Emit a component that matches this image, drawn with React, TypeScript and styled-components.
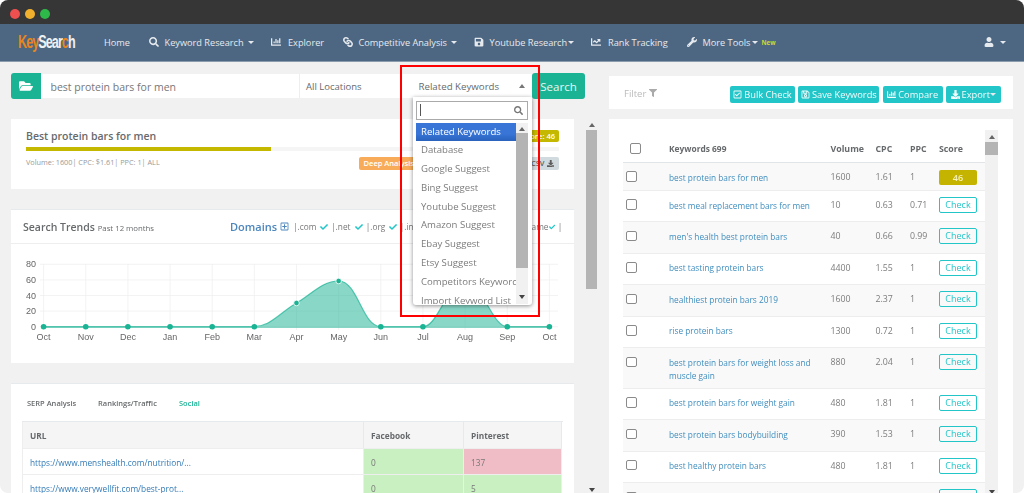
import React from 'react';
import styled, { createGlobalStyle } from 'styled-components';
import { FaSearch, FaChartBar, FaLink, FaRegSave, FaSave, FaChartLine, FaWrench, FaUser, FaFolderOpen, FaFilter, FaRegCheckSquare, FaDownload, FaCheck, FaRegPlusSquare } from 'react-icons/fa';

const Global = createGlobalStyle`
  html, body { margin: 0; padding: 0; background: #fff; }
  body { font-family: "Open Sans", "Liberation Sans", sans-serif; color: #676a6c; }
  * { box-sizing: border-box; }
`;

const Frame = styled.div`
  width: 1024px; height: 493px; overflow: hidden; border-radius: 8px; background: #f1f1f1; filter: blur(.3px);
`;
const TitleBar = styled.div`
  height: 24px; background: #363636; display: flex; align-items: center; gap: 5px; padding: 3px 0 0 10px;
`;
const Dot = styled.span<{ $c: string }>`
  width: 10px; height: 10px; border-radius: 50%; background: ${p => p.$c};
`;
const Nav = styled.nav`
  height: 37.5px; background: #4d6782; border-bottom: 1px solid #8b9cae; display: flex; align-items: center;
  padding-left: 18px; color: #e6eaee; font-size: 9.2px; white-space: nowrap;
`;
const Logo = styled.div`
  width: 58px; margin-right: 28px; font-family: "Liberation Sans", sans-serif; font-weight: 700; font-size: 14px;
  letter-spacing: -1.05px; color: #eef0f2; transform: scale(.9, 1.25); transform-origin: left center;
`;
const LogoKey = styled.span`color: #e8861c;`;
const NavItem = styled.span<{ $w: number; $gap?: number }>`
  width: ${p => p.$w}px; display: flex; align-items: center; gap: ${p => p.$gap ?? 5.5}px; flex: none;
  svg { font-size: 10px; flex: none; }
`;
const LinkIcon = styled(FaLink)`transform: rotate(90deg);`;
const Caret = styled.i<{ $ml?: number }>`
  display: inline-block; width: 0; height: 0; border: 3px solid transparent; border-top: 3.5px solid #e6eaee; border-bottom: 0; margin-left: ${p => p.$ml ?? -1.5}px;
`;
const NewTag = styled.b`
  color: #c8d93a; font-size: 6.3px; margin-left: -2.5px;
`;
const UserMenu = styled.span`
  margin-left: auto; margin-right: 18px; display: flex; align-items: center; gap: 8px; svg { font-size: 10px; }
`;
const Main = styled.main`
  display: flex; gap: 24px; padding: 11.5px 0 0 11px; height: 431px; overflow: hidden;
`;
const LeftCol = styled.div`width: 574px; flex: none;`;
const SearchRow = styled.div`display: flex; height: 26px; font-size: 9.5px;`;
const FolderBtn = styled.div`
  width: 30px; background: #1ab394; border-radius: 3px 0 0 3px; color: #fff; display: flex; align-items: center; justify-content: center; font-size: 14px;
`;
const SearchInput = styled.input`
  width: 258px; height: 24.5px; margin-top: .5px; border: 0; padding: 2px 10px 0 9.5px; background: #fff; font: 10.5px "Open Sans", sans-serif; color: #777; outline: none;
`;
const LocationSelect = styled.div`
  width: 101px; height: 24.5px; margin-top: .5px; padding-left: 6px; background: #fff; border-left: 1px solid #eee; line-height: 25px; color: #676a6c; position: relative;
`;
const SelectArrow = styled.i<{ $up?: boolean }>`
  position: absolute; top: 10px; width: 0; height: 0; border: 3px solid transparent;
  ${p => p.$up ? 'border-bottom: 4px solid #777; border-top: 0; right: 7px;' : 'border-top: 4px solid #777; border-bottom: 0; right: -6px; top: 9px;'}
`;
const RelatedSelect = styled.div`
  width: 132px; height: 24.5px; margin-top: .5px; padding-left: 18.5px; background: #fff; line-height: 25px; font-size: 9.7px; color: #676a6c; position: relative; z-index: 3;
`;
const SearchBtn = styled.div`
  width: 53px; background: #1ab394; border-radius: 3px; color: #e8f7f3; font-size: 11.5px; display: flex; align-items: center; justify-content: center;
`;
const Dropdown = styled.div`
  position: absolute; left: 12.5px; top: 23.5px; width: 119px; height: 208px; background: #fff; box-shadow: 0 1px 4px rgba(0,0,0,.45); padding: 3.5px 3.5px 0; overflow: hidden; border-radius: 0 0 3px 3px;
`;
const DropSearch = styled.div`
  height: 19px; border: 1px solid #aaa; display: flex; align-items: center; justify-content: space-between; padding: 0 4px 0 3px; color: #777; font-size: 9px;
`;
const Cursor = styled.i`width: 1px; height: 12px; background: #555;`;
const DropBody = styled.div`display: flex; margin-top: 3px; height: 181px;`;
const DropList = styled.ul`
  list-style: none; margin: 0; padding: 0; width: 100px; height: 181px; overflow: hidden; font-size: 9.6px; color: #7c7c7c;
`;
const DropItem = styled.li<{ $on?: boolean }>`
  height: 18.8px; line-height: 18.8px; padding-left: 5px; white-space: nowrap; overflow: hidden;
  ${p => p.$on ? 'background: linear-gradient(#3875d7 60%, #2a62bc); color: #fff;' : ''}
`;
const Highlight = styled.div`
  position: absolute; left: 0; top: -9px; width: 140px; height: 252px; border: 2px solid #f00; pointer-events: none; z-index: 4;
`;
const Track = styled.div<{ $w: number; $h: number; $mt?: number }>`
  width: ${p => p.$w}px; height: ${p => p.$h}px; margin-top: ${p => p.$mt ?? 0}px; flex: none; background: #f1f1f1; position: relative; display: flex; flex-direction: column; align-items: center;
`;
const ArrowUp = styled.i<{ $mt: number }>`
  width: 0; height: 0; border: 3px solid transparent; border-bottom: 4px solid #666; border-top: 0; margin-top: ${p => p.$mt}px;
`;
const ArrowDown = styled.i<{ $b: number }>`
  position: absolute; bottom: ${p => p.$b}px; width: 0; height: 0; border: 3px solid transparent; border-top: 4px solid #444; border-bottom: 0;
`;
const Thumb = styled.div<{ $top: number; $h: number }>`
  width: 100%; height: ${p => p.$h}px; margin-top: ${p => p.$top}px; background: #b4b4b4;
`;
const LeftBody = styled.div`display: flex; gap: 12px;`;
const Cards = styled.div`width: 563px; flex: none; padding-top: 20px;`;
const Card = styled.section`background: #fff;`;
const KeywordCard = styled(Card)`
  height: 70px; padding: 10px 15px 0; position: relative;
`;
const KwTitle = styled.h2`margin: 0; font-size: 10.5px; line-height: 15px; font-weight: 600; color: #676a6c;`;
const Progress = styled.div`height: 4px; margin-top: 3px; background: #f5f5f5;`;
const ProgressFill = styled.div<{ $w: number }>`height: 100%; width: ${p => p.$w}px; background: #c4b800;`;
const KwFoot = styled.div`display: flex; align-items: flex-start; justify-content: space-between; margin-top: 6px; font-size: 7.3px; color: #999;`;
const FootButtons = styled.div`display: flex; gap: 107px;`;
const SmallBtn = styled.span<{ $bg: string; $c: string }>`
  height: 13px; padding: 0 5px; line-height: 13px; border-radius: 2px; background: ${p => p.$bg}; color: ${p => p.$c}; font-size: 7.5px; font-weight: 600; display: flex; align-items: center; gap: 2px;
`;
const ScoreBadge = styled.span`
  position: absolute; right: 15px; top: 11px; height: 12px; line-height: 12px; padding: 0 4px; background: #c4b800; color: #fff; font-size: 7.5px; font-weight: 600; border-radius: 2px;
`;
const TrendCard = styled(Card)`height: 154px; margin-top: 20px; border-top: 1px solid #e7eaec;`;
const TrendHead = styled.header`
  height: 34px; border-bottom: 1px solid #eee; display: flex; align-items: center; padding-left: 12px; white-space: nowrap;
`;
const TrendTitle = styled.h3`margin: 0; width: 207px; font-size: 10.5px; font-weight: 600; color: #676a6c; span { font-size: 7.8px; font-weight: 400; }`;
const Domains = styled.b`font-size: 11px; font-weight: 600; color: #4c86bd; display: flex; align-items: center; gap: 3px; margin-right: 4px; svg { font-size: 9px; }`;
const DomainOpt = styled.span<{ $w: number }>`
  font-size: 8.3px; color: #777; width: ${p => p.$w}px; flex: none; display: flex; align-items: center; justify-content: space-between; padding-right: 3px;
  svg { color: #23c6c8; font-size: 8px; }
`;
const TablesCard = styled(Card)`height: 120px; margin-top: 20px; padding: 0 11px; border-top: 1px solid #e7eaec;`;
const Tabs = styled.div`height: 38px; padding: 1px 0 0 5px; display: flex; align-items: center; font-size: 7.5px; font-weight: 600; border-bottom: 1px solid #e7eaec;`;
const Tab = styled.span<{ $w: number; $on?: boolean }>`width: ${p => p.$w}px; color: ${p => p.$on ? '#1ab394' : '#676a6c'};`;
const UrlGrid = styled.div`
  display: grid; grid-template-columns: 341px 100px 98px; font-size: 8.3px; grid-auto-rows: 26.5px; border-left: 1px solid #eee;
`;
const UrlHead = styled.div`background: #f5f5f6; font-weight: 700; padding-left: 7px; line-height: 28px; border-right: 1px solid #e7eaec; border-bottom: 1px solid #eee;`;
const UrlCell = styled.div<{ $bg?: string }>`
  background: ${p => p.$bg || '#fff'}; padding-left: 7px; line-height: 27px; border-bottom: 1px solid #eee; border-right: 1px solid #eee; color: ${p => p.$bg ? '#777' : '#337ab7'};
`;
const RightCol = styled.div`width: 404px; flex: none; padding-top: 3px;`;
const FilterCard = styled(Card)`
  height: 33px; display: flex; align-items: center; padding: 4px 12px 0 15px; gap: 3.33px;
`;
const FilterLabel = styled.span`
  margin: 0 auto 3px 0; color: #bbb; font-size: 9.5px; display: flex; gap: 3px; align-items: center; svg { font-size: 8px; color: #aaa; }
`;
const ActionBtn = styled.span<{ $w: number }>`
  width: ${p => p.$w}px; height: 17px; background: #23c6c8; border-radius: 2px; color: #f3fcfc; font-size: 9.3px; display: flex; align-items: center; justify-content: center; gap: 2px; white-space: nowrap;
  svg { font-size: 9px; }
`;
const TableCard = styled(Card)`
  margin-top: 10px; height: 380px; padding: 11px 0 0 14px; display: flex;
`;
const KwTable = styled.div`width: 362px; flex: none;`;
const KwRow = styled.div<{ $h: number; $odd?: boolean }>`
  display: grid; grid-template-columns: 46px 161.5px 45px 34.5px 29px 38px; height: ${p => p.$h}px; background: ${p => p.$odd ? '#f9f9f9' : '#fff'}; border-bottom: 1px solid #ededed; font-size: 8.8px; color: #7d7d7d;
`;
const KwHeader = styled.div`
  display: grid; grid-template-columns: 46px 161.5px 45px 34.5px 29px 38px; height: 33px; padding-top: 9.5px; line-height: 18px; border-bottom: 1.5px solid #e2e5e7; font-size: 8.8px; font-weight: 700; color: #676a6c;
`;
const HeadKeyword = styled.span`font-size: 8.4px;`;
const Box = styled.span<{ $ml: number }>`
  display: block; width: 10.5px; height: 10.5px; border: 1.2px solid #8a8a8a; border-radius: 2px; background: #fff; margin-left: ${p => p.$ml}px;
`;
const BoxCell = styled.div`height: 27px; display: flex; align-items: center;`;
const HeadBoxCell = styled.div`height: 18px; display: flex; align-items: center;`;
const KwLink = styled.div`padding-top: 7.5px; line-height: 13.5px; font-size: 8.3px; color: #3f8dbe; padding-right: 4px;`;
const Num = styled.div`line-height: 28px;`;
const ScoreCell = styled.div`height: 28px; display: flex; align-items: center;`;
const ScoreChip = styled.span`
  width: 38px; height: 15px; border-radius: 2px; background: #c4b400; color: #f7f3c0; text-align: center; line-height: 15px; font-size: 9px; font-weight: 600;
`;
const CheckBtn = styled.span`
  width: 38px; height: 16px; border-radius: 2px; border: 1px solid #23c6c8; color: #23c6c8; text-align: center; line-height: 14px; font-size: 9px;
`;

const MONTHS = ['Oct','Nov','Dec','Jan','Feb','Mar','Apr','May','Jun','Jul','Aug','Sep','Oct'];
const X = (i: number) => 43.6 + 42.15 * i;
const Y = [326.7, 311.1, 295.5, 279.9, 264.3];
const DOTS = [326.7,326.7,326.7,326.7,326.7,326.7,303,281,326.7,326.7,285,326.7,326.7];
const LINE = 'M43.6 326.7 L254.4 326.7 C270 326.7 282 311 296.5 303 C312 294 322 281 338.7 281 C358 281 362 326.7 380.8 326.7 L423 326.7 C438 326.7 445 285 465 285 C485 285 492 326.7 507.3 326.7 L549.4 326.7';

function Chart() {
  return (
    <svg width="563" height="119" viewBox="11 244 563 119" style={{ display: 'block' }}>
      {Y.map(y => <line key={y} x1="40" x2="558" y1={y} y2={y} stroke="#eee" strokeWidth="0.7" />)}
      {MONTHS.map((_, i) => <line key={i} x1={X(i)} x2={X(i)} y1="264" y2="330" stroke="#eee" strokeWidth="0.7" />)}
      {Y.map((y, i) => <text key={y} x="36" y={y + 3} textAnchor="end" fontSize="9" fontFamily="Liberation Sans, sans-serif" fill="#666">{i * 20}</text>)}
      {MONTHS.map((m, i) => <text key={i} x={X(i)} y="340" textAnchor="middle" fontSize="9" fontFamily="Liberation Sans, sans-serif" fill="#666">{m}</text>)}
      <path d={LINE + ' L549.4 328 L43.6 328 Z'} fill="#1ab394" fillOpacity=".52" />
      <path d={LINE} fill="none" stroke="#1ab394" strokeOpacity=".7" strokeWidth="1.2" />
      {DOTS.map((y, i) => <circle key={i} cx={X(i)} cy={y} r="2.8" fill="#1ab394" stroke="#fff" strokeWidth={y < 320 ? 0.8 : 0} />)}
    </svg>
  );
}

const ROWS: [string, string, string, string, number][] = [
  ['best meal replacement bars for men', '10', '0.63', '0.71', 31.4],
  ["men's health best protein bars", '40', '0.66', '0.99', 31.6],
  ['best tasting protein bars', '4400', '1.55', '1', 31.4],
  ['healthiest protein bars 2019', '1600', '2.37', '1', 31.6],
  ['rise protein bars', '1300', '0.72', '1', 31.4],
  ['best protein bars for weight loss and muscle gain', '880', '2.04', '1', 40.6],
  ['best protein bars for weight gain', '480', '1.81', '1', 31.4],
  ['best protein bars bodybuilding', '390', '1.53', '1', 31.4],
  ['best healthy protein bars', '480', '1.81', '1', 31.6],
  ['best protein bars 2019', '1600', '1.20', '1', 31.4],
];

const OPTIONS = ['Related Keywords','Database','Google Suggest','Bing Suggest','Youtube Suggest','Amazon Suggest','Ebay Suggest','Etsy Suggest','Competitors Keywords','Import Keyword List'];

export default function App() {
  return (
    <Frame>
      <Global />
      <TitleBar>
        <Dot $c="#ee4f4f" /><Dot $c="#f0b02e" /><Dot $c="#2fb84a" />
      </TitleBar>
      <Nav>
        <Logo><LogoKey>Key</LogoKey>Sear<LogoKey>c</LogoKey>h</Logo>
        <NavItem $w={45}>Home</NavItem>
        <NavItem $w={122}><FaSearch />Keyword Research <Caret /></NavItem>
        <NavItem $w={72} $gap={7}><FaChartBar />Explorer</NavItem>
        <NavItem $w={131}><LinkIcon />Competitive Analysis <Caret /></NavItem>
        <NavItem $w={117}><FaSave />Youtube Research<Caret $ml={-4.5} /></NavItem>
        <NavItem $w={96} $gap={7}><FaChartLine />Rank Tracking</NavItem>
        <NavItem $w={90}><FaWrench />More Tools<Caret $ml={-3.5} /><NewTag>New</NewTag></NavItem>
        <UserMenu><FaUser /><Caret /></UserMenu>
      </Nav>
      <Main>
        <LeftCol>
          <SearchRow>
            <FolderBtn><FaFolderOpen /></FolderBtn>
            <SearchInput defaultValue="best protein bars for men" />
            <LocationSelect>All Locations<SelectArrow /></LocationSelect>
            <RelatedSelect>
              Related Keywords<SelectArrow $up />
              <Dropdown>
                <DropSearch><Cursor /><FaSearch /></DropSearch>
                <DropBody>
                  <DropList>
                    {OPTIONS.map((o, i) => <DropItem key={o} $on={i === 0}>{o}</DropItem>)}
                  </DropList>
                  <Track $w={12} $h={181}>
                    <ArrowUp $mt={4} />
                    <Thumb $top={2} $h={135} />
                    <ArrowDown $b={5} />
                  </Track>
                </DropBody>
              </Dropdown>
              <Highlight />
            </RelatedSelect>
            <SearchBtn>Search</SearchBtn>
          </SearchRow>
          <LeftBody>
            <Cards>
              <KeywordCard>
                <KwTitle>Best protein bars for men</KwTitle>
                <ScoreBadge>Score: 46</ScoreBadge>
                <Progress><ProgressFill $w={245} /></Progress>
                <KwFoot>
                  <span>Volume: 1600| CPC: $1.61| PPC: 1| ALL</span>
                  <FootButtons>
                    <SmallBtn $bg="#f8ac59" $c="#fff">Deep Analysis</SmallBtn>
                    <SmallBtn $bg="#d1dade" $c="#5e5e5e">CSV <FaDownload /></SmallBtn>
                  </FootButtons>
                </KwFoot>
              </KeywordCard>
              <TrendCard>
                <TrendHead>
                  <TrendTitle>Search Trends <span>Past 12 months</span></TrendTitle>
                  <Domains>Domains <FaRegPlusSquare /></Domains>
                  <DomainOpt $w={38}>|.com<FaCheck /></DomainOpt>
                  <DomainOpt $w={34.7}>|.net<FaCheck /></DomainOpt>
                  <DomainOpt $w={34}>|.org<FaCheck /></DomainOpt>
                  <DomainOpt $w={61}>|.info<FaCheck /></DomainOpt>
                  <DomainOpt $w={59}>|.biz<FaCheck /></DomainOpt>
                  <DomainOpt $w={38}>|.name<FaCheck /></DomainOpt>
                  <DomainOpt $w={6}>|</DomainOpt>
                </TrendHead>
                <Chart />
              </TrendCard>
              <TablesCard>
                <Tabs>
                  <Tab $w={71}>SERP Analysis</Tab>
                  <Tab $w={81}>Rankings/Traffic</Tab>
                  <Tab $w={40} $on>Social</Tab>
                </Tabs>
                <UrlGrid>
                  <UrlHead>URL</UrlHead><UrlHead>Facebook</UrlHead><UrlHead>Pinterest</UrlHead>
                  <UrlCell>https://www.menshealth.com/nutrition/...</UrlCell><UrlCell $bg="#c8f0c0">0</UrlCell><UrlCell $bg="#f0bcc5">137</UrlCell>
                  <UrlCell>https://www.verywellfit.com/best-prot...</UrlCell><UrlCell $bg="#c8f0c0">0</UrlCell><UrlCell $bg="#c8f0c0">5</UrlCell>
                </UrlGrid>
              </TablesCard>
            </Cards>
            <Track $w={11} $h={374} $mt={20}>
              <ArrowUp $mt={3.5} />
              <Thumb $top={3.5} $h={159} />
              <ArrowDown $b={1} />
            </Track>
          </LeftBody>
        </LeftCol>
        <RightCol>
          <FilterCard>
            <FilterLabel>Filter <FaFilter /></FilterLabel>
            <ActionBtn $w={65}><FaRegCheckSquare />Bulk Check</ActionBtn>
            <ActionBtn $w={81}><FaRegSave />Save Keywords</ActionBtn>
            <ActionBtn $w={60}><FaChartBar />Compare</ActionBtn>
            <ActionBtn $w={55}><FaDownload />Export <Caret /></ActionBtn>
          </FilterCard>
          <TableCard>
            <KwTable>
              <KwHeader>
                <HeadBoxCell><Box $ml={7} /></HeadBoxCell>
                <HeadKeyword>Keywords 699</HeadKeyword><span>Volume</span><span>CPC</span><span>PPC</span><span>Score</span>
              </KwHeader>
              <KwRow $h={28} $odd>
                <BoxCell><Box $ml={3} /></BoxCell>
                <KwLink>best protein bars for men</KwLink>
                <Num>1600</Num><Num>1.61</Num><Num>1</Num>
                <ScoreCell><ScoreChip>46</ScoreChip></ScoreCell>
              </KwRow>
              {ROWS.map((r, i) => (
                <KwRow key={r[0]} $h={r[4]} $odd={i % 2 === 1}>
                  <BoxCell><Box $ml={3} /></BoxCell>
                  <KwLink>{r[0]}</KwLink>
                  <Num>{r[1]}</Num><Num>{r[2]}</Num><Num>{r[3]}</Num>
                  <ScoreCell><CheckBtn>Check</CheckBtn></ScoreCell>
                </KwRow>
              ))}
            </KwTable>
            <Track $w={13} $h={369}>
              <ArrowUp $mt={5} />
              <Thumb $top={3} $h={13} />
              <ArrowDown $b={5} />
            </Track>
          </TableCard>
        </RightCol>
      </Main>
    </Frame>
  );
}
